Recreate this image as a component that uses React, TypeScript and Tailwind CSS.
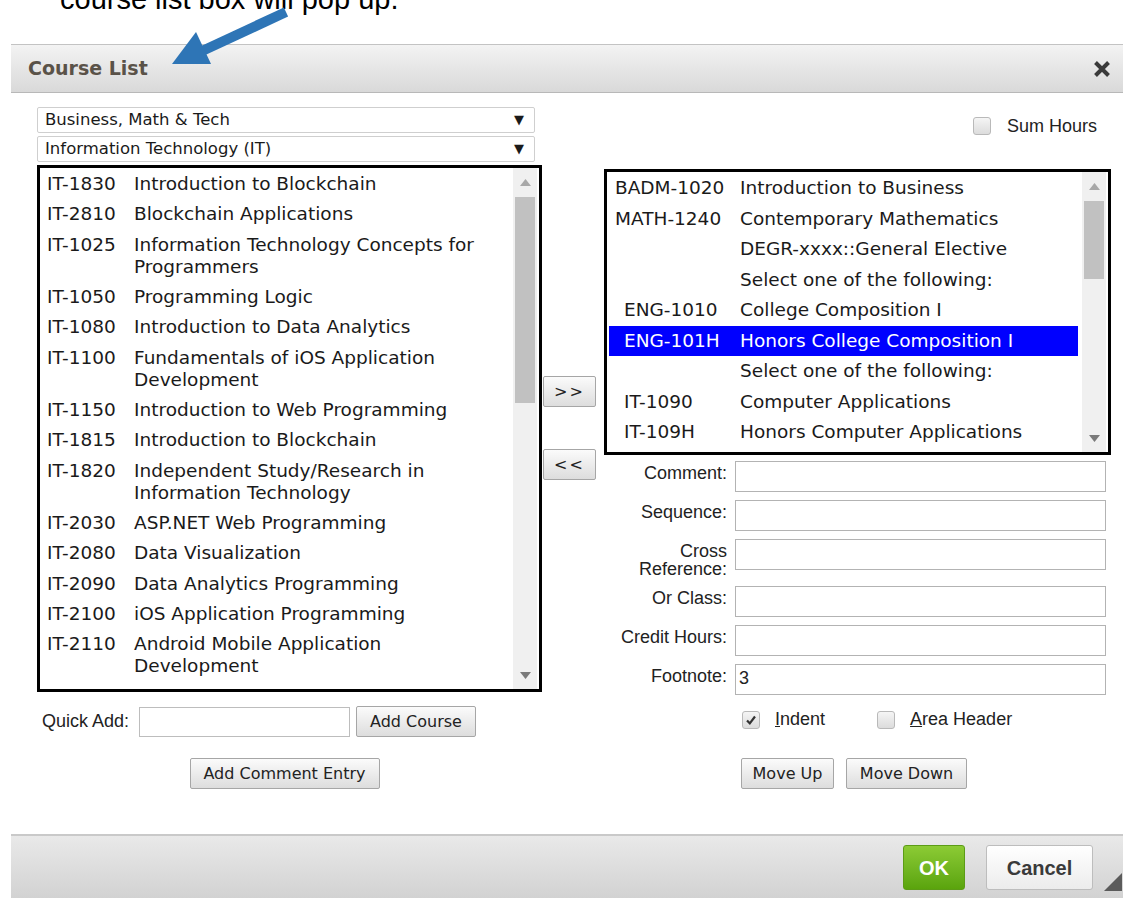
import React from "react";

type Course = { code: string; lines: string[] };

type PlanRow = {
  code?: string;
  title: string;
  indent?: boolean;
  selected?: boolean;
};

const catalog: Course[] = [
  { code: "IT-1830", lines: ["Introduction to Blockchain"] },
  { code: "IT-2810", lines: ["Blockchain Applications"] },
  { code: "IT-1025", lines: ["Information Technology Concepts for", "Programmers"] },
  { code: "IT-1050", lines: ["Programming Logic"] },
  { code: "IT-1080", lines: ["Introduction to Data Analytics"] },
  { code: "IT-1100", lines: ["Fundamentals of iOS Application", "Development"] },
  { code: "IT-1150", lines: ["Introduction to Web Programming"] },
  { code: "IT-1815", lines: ["Introduction to Blockchain"] },
  { code: "IT-1820", lines: ["Independent Study/Research in", "Information Technology"] },
  { code: "IT-2030", lines: ["ASP.NET Web Programming"] },
  { code: "IT-2080", lines: ["Data Visualization"] },
  { code: "IT-2090", lines: ["Data Analytics Programming"] },
  { code: "IT-2100", lines: ["iOS Application Programming"] },
  { code: "IT-2110", lines: ["Android Mobile Application", "Development"] },
  { code: "IT-2120", lines: ["Mobile Application Capstone"] },
];

const plan: PlanRow[] = [
  { code: "BADM-1020", title: "Introduction to Business" },
  { code: "MATH-1240", title: "Contemporary Mathematics" },
  { title: "DEGR-xxxx::General Elective" },
  { title: "Select one of the following:" },
  { code: "ENG-1010", title: "College Composition I", indent: true },
  { code: "ENG-101H", title: "Honors College Composition I", indent: true, selected: true },
  { title: "Select one of the following:" },
  { code: "IT-1090", title: "Computer Applications", indent: true },
  { code: "IT-109H", title: "Honors Computer Applications", indent: true },
];

const fields = [
  { label: ["Comment:"], value: "" },
  { label: ["Sequence:"], value: "" },
  { label: ["Cross", "Reference:"], value: "" },
  { label: ["Or Class:"], value: "" },
  { label: ["Credit Hours:"], value: "" },
  { label: ["Footnote:"], value: "3" },
];

function Arrow({ down }: { down?: boolean }) {
  return (
    <svg width="11" height="7" viewBox="0 0 11 7">
      {down ? (
        <polygon points="0,0 11,0 5.5,7" fill="#7a7a7a" />
      ) : (
        <polygon points="0,7 11,7 5.5,0" fill="#a8a8a8" />
      )}
    </svg>
  );
}

function Scrollbar({ thumb }: { thumb: number }) {
  return (
    <div className="mr-[2px] flex w-[24px] shrink-0 flex-col bg-[#f0f0f0]">
      <div className="flex h-[28px] items-center justify-center">
        <Arrow />
      </div>
      <div
        className="mx-[2px] mt-[1px] bg-[#c1c1c1]"
        style={{ height: thumb }}
      />
      <div className="flex-1" />
      <div className="flex h-[28px] items-center justify-center">
        <Arrow down />
      </div>
    </div>
  );
}

function Button({
  children,
  className = "",
}: {
  children: React.ReactNode;
  className?: string;
}) {
  return (
    <button
      type="button"
      className={
        "h-[31px] rounded-[2px] border border-[#a6a6a6] bg-gradient-to-b from-[#fbfbfb] to-[#dddddd] font-['DejaVu_Sans',sans-serif] text-[16px] text-[#222] " +
        className
      }
    >
      {children}
    </button>
  );
}

function Checkbox({ checked }: { checked?: boolean }) {
  return (
    <span className="flex h-[18px] w-[18px] items-center justify-center rounded-[3px] border border-[#b9b9b9] bg-gradient-to-b from-[#f5f5f5] to-[#dcdcdc]">
      {checked && (
        <svg width="12" height="12" viewBox="0 0 12 12">
          <path
            d="M2 6.5 L4.8 9.3 L10 2.5"
            fill="none"
            stroke="#333"
            strokeWidth="2.2"
          />
        </svg>
      )}
    </span>
  );
}

function Select({ value }: { value: string }) {
  return (
    <div className="flex h-[26px] w-[498px] items-center justify-between rounded-[2px] border border-[#cfcfcf] bg-white pl-[7px] pr-[10px] font-['DejaVu_Sans',sans-serif] text-[16.5px] text-[#1a1a1a]">
      <span>{value}</span>
      <span className="text-[13px]">▼</span>
    </div>
  );
}

export default function App() {
  return (
    <div className="relative h-[898px] w-[1123px] overflow-hidden bg-white font-['Liberation_Sans',Arial,sans-serif]">
      {/* caption above the dialog, scrolled partly out of view */}
      <div className="flex h-[44px] flex-col">
        <p className="-mt-[15px] pl-[60px] text-[29px] leading-[29px] text-black">
          course list box will pop up.
        </p>
      </div>

      <div className="ml-[11px] w-[1112px]">
        {/* title bar */}
        <div className="flex h-[49px] items-center justify-between border-y border-t-[#c3c3c3] border-b-[#b8b8b8] bg-gradient-to-b from-[#f3f3f3] to-[#d9d9d9] pl-[17px] pr-[12px]">
          <span className="font-['DejaVu_Sans',sans-serif] text-[19px] font-bold text-[#5a5248]">
            Course List
          </span>
          <svg width="18" height="18" viewBox="0 0 18 18">
            <path
              d="M2.5 2.5 L15.5 15.5 M15.5 2.5 L2.5 15.5"
              stroke="#3a3a3a"
              strokeWidth="4"
            />
          </svg>
        </div>

        {/* body */}
        <div className="flex h-[741px] bg-white pl-[26px]">
          {/* catalog column */}
          <div className="flex w-[505px] flex-col pt-[14px]">
            <Select value="Business, Math & Tech" />
            <div className="mt-[3px]">
              <Select value="Information Technology (IT)" />
            </div>
            <div className="mt-[3px] flex h-[527px] overflow-hidden border-[3px] border-black bg-white">
              <div className="flex-1 overflow-hidden pt-[1px] font-['DejaVu_Sans',sans-serif] text-[18.5px] leading-[22.25px] text-[#1a1a1a]">
                {catalog.map((c) => (
                  <div key={c.code} className="flex py-[4px] pl-[7px]">
                    <span className="w-[87px] shrink-0">{c.code}</span>
                    <span className="flex flex-col whitespace-nowrap">
                      {c.lines.map((l) => (
                        <span key={l}>{l}</span>
                      ))}
                    </span>
                  </div>
                ))}
              </div>
              <Scrollbar thumb={206} />
            </div>

            <div className="mt-[14px] flex items-center">
              <span className="ml-[5px] w-[97px] text-[18px] text-[#222]">Quick Add:</span>
              <input className="h-[30px] w-[211px] border border-[#bdbdbd] bg-white" />
              <Button className="ml-[6px] w-[120px]">Add Course</Button>
            </div>
            <div className="mt-[21px] flex justify-center pr-[10px]">
              <Button className="w-[190px]">Add Comment Entry</Button>
            </div>
          </div>

          {/* move buttons */}
          <div className="flex w-[62px] flex-col pl-[1px] pt-[283px]">
            <Button className="w-[53px] text-[15px] tracking-[2px]">&gt;&gt;</Button>
            <Button className="mt-[42px] w-[53px] text-[15px] tracking-[2px]">&lt;&lt;</Button>
          </div>

          {/* plan column */}
          <div className="flex w-[507px] flex-col pt-[24px]">
            <div className="flex h-[18px] items-center justify-end gap-[16px] pr-[14px]">
              <Checkbox />
              <span className="text-[18px] text-[#222]">Sum Hours</span>
            </div>

            <div className="mt-[34px] flex h-[286px] overflow-hidden border-[3px] border-black bg-white">
              <div className="flex-1 overflow-hidden pl-[2px] pr-[4px] pt-[1px] font-['DejaVu_Sans',sans-serif] text-[18.5px] leading-[22.5px]">
                {plan.map((r, i) => (
                  <div
                    key={i}
                    className={
                      r.selected
                        ? "flex bg-[#0000ff] py-[4px] text-white"
                        : "flex py-[4px] text-[#1a1a1a]"
                    }
                  >
                    <span
                      className={
                        r.indent
                          ? "w-[131px] shrink-0 pl-[15px]"
                          : "w-[131px] shrink-0 pl-[6px]"
                      }
                    >
                      {r.code}
                    </span>
                    <span className="whitespace-nowrap">{r.title}</span>
                  </div>
                ))}
              </div>
              <Scrollbar thumb={78} />
            </div>

            <div className="mt-[6px] grid grid-cols-[123px_371px] gap-x-[8px] gap-y-[8px]">
              {fields.map((f) => (
                <React.Fragment key={f.label.join(" ")}>
                  <div className="flex flex-col items-end pt-[3px] text-[18px] leading-[18px] text-[#222]">
                    {f.label.map((l) => (
                      <span key={l}>{l}</span>
                    ))}
                  </div>
                  <div className="flex h-[31px] items-end border border-[#b3b3b3] bg-white pb-[2px] pl-[3px] text-[18px] text-[#222]">
                    {f.value}
                  </div>
                </React.Fragment>
              ))}
            </div>

            <div className="ml-[138px] mt-[11px] flex items-center text-[18px] text-[#222]">
              <Checkbox checked />
              <span className="ml-[15px]">
                <span className="underline">I</span>ndent
              </span>
              <span className="ml-[52px]">
                <Checkbox />
              </span>
              <span className="ml-[15px]">
                <span className="underline">A</span>rea Header
              </span>
            </div>

            <div className="ml-[137px] mt-[25px] flex gap-[12px]">
              <Button className="w-[93px]">Move Up</Button>
              <Button className="w-[121px]">Move Down</Button>
            </div>
          </div>
        </div>

        {/* footer */}
        <div className="relative flex h-[70px] items-start justify-end gap-[21px] border-t-2 border-[#c9c9c9] bg-gradient-to-b from-[#e9e9e9] to-[#d0d0d0] pr-[30px] pt-[9px]">
          <button
            type="button"
            className="h-[45px] w-[62px] rounded-[3px] border border-[#5c9c16] bg-gradient-to-b from-[#8ccb34] to-[#5aa40c] text-[20px] font-bold text-white"
          >
            OK
          </button>
          <button
            type="button"
            className="h-[45px] w-[107px] rounded-[3px] border border-[#bdbdbd] bg-gradient-to-b from-white to-[#ececec] text-[20px] font-bold text-[#3a3a3a]"
          >
            Cancel
          </button>
          <svg
            className="absolute bottom-[13px] right-[1px]"
            width="18"
            height="18"
            viewBox="0 0 18 18"
          >
            <polygon points="18,0 18,18 0,18" fill="#5b5b5b" />
          </svg>
        </div>
      </div>

      {/* annotation arrow pointing at the dialog title */}
      <svg
        className="pointer-events-none absolute left-0 top-0"
        width="320"
        height="80"
        viewBox="0 0 320 80"
      >
        <line x1="286" y1="12" x2="200" y2="52" stroke="#2e75b6" strokeWidth="10" />
        <polygon points="172,64 196,32 211,64" fill="#2e75b6" />
      </svg>
    </div>
  );
}
